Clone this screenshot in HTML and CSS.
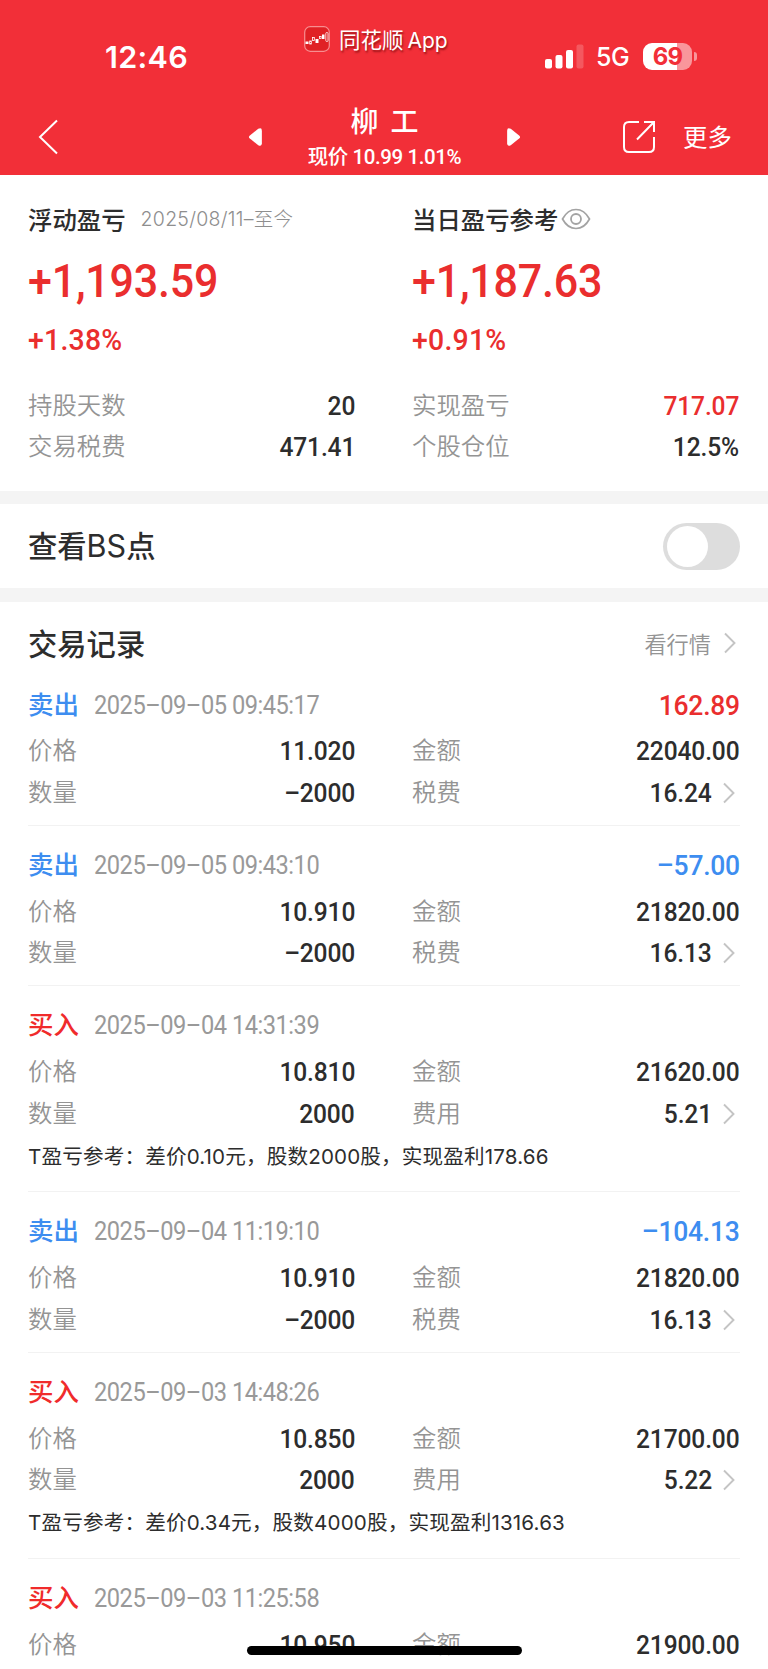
FILE: index.html
```html
<!DOCTYPE html>
<html lang="zh-CN">
<head>
<meta charset="utf-8">
<title>柳工</title>
<link rel="stylesheet" href="styles.css">
</head>
<body>
<svg width="0" height="0" class="defs"><symbol id="chev" viewBox="0 0 14 22"><path d="M2 1.5 11.5 11 2 20.5" fill="none" stroke="#c4c4c4" stroke-width="1.900"/></symbol></svg>
<div class="screen">
<header class="header">
  <div class="status">
    <span class="clock">12:46</span>
    <div class="app">
      <svg class="appicon" width="26" height="26" viewBox="0 0 26 26"><rect x=".7" y=".7" width="24.6" height="24.6" rx="5.5" fill="#e02125" stroke="#f78e90" stroke-width="1.2"/><g fill="#fff"><rect x="1.5" y="15.5" width="3" height="2.5"/><rect x="11.5" y="13" width="3" height="4"/><rect x="18" y="8.5" width="2.5" height="4.5"/></g><g fill="none" stroke="#fff" stroke-width=".8"><rect x="5.7" y="15" width="1.6" height="3"/><rect x="8.5" y="11.5" width="1.8" height="3"/><rect x="15.5" y="10.5" width="1.6" height="2"/><rect x="21.8" y="6.5" width="2.2" height="9" rx="1"/></g></svg>
      <span class="appname">同花顺<span class="latin">App</span></span>
    </div>
    <div class="signals">
      <svg width="39" height="25" viewBox="0 0 39 25"><g fill="#fff"><rect y="15" width="7" height="9.5" rx="2"/><rect x="10.5" y="11" width="7" height="13.5" rx="2"/><rect x="21" y="6" width="7" height="18.500" rx="2"/><rect x="31.500" y="0.500" width="7" height="24" rx="2" opacity=".2"/></g></svg>
      <span class="net">5G</span>
      <div class="battery"><span>69</span></div><i class="nub"></i>
    </div>
  </div>
  <nav class="nav">
    <svg class="back" width="22" height="36" viewBox="0 0 22 36"><path d="M19 1.500 2 18 19 34.500" fill="none" stroke="#fff" stroke-width="2"/></svg>
    <svg class="prev" width="15" height="20" viewBox="0 0 16 22"><path d="M1.500 9.500 11 2Q15 0 15 4V18Q15 22 11 20L1.500 12.500Q0 11 1.500 9.500Z" fill="#fff"/></svg>
    <div class="stock"><div class="name"><span>柳</span><span>工</span></div><div class="price">现价 10.99 1.01%</div></div>
    <svg class="next" width="15" height="20" viewBox="0 0 16 22"><path d="M14.500 9.500 5 2Q1 0 1 4V18Q1 22 5 20L14.500 12.500Q16 11 14.500 9.500Z" fill="#fff"/></svg>
    <svg class="share" width="34" height="34" viewBox="0 0 34 34"><path d="M17 2H7Q2 2 2 7V27Q2 32 7 32H27Q32 32 32 27V17M22 2H32V12M31.500 2.500 15 19.500" fill="none" stroke="#fff" stroke-width="2"/></svg>
    <span class="more">更多</span>
  </nav>
</header>

<section class="summary">
  <div>
    <div class="cap">浮动盈亏<span class="range">2025/08/11–至今</span></div>
    <div class="big">+1,193.59</div>
    <div class="pct">+1.38%</div>
    <div class="row"><span>持股天数</span><b>20</b></div>
    <div class="row"><span>交易税费</span><b>471.41</b></div>
  </div>
  <div>
    <div class="cap">当日盈亏参考<svg class="eye" width="30" height="22" viewBox="0 0 30 22"><path d="M1.500 11C5 4.500 9.500 1.500 15 1.500S25 4.500 28.500 11C25 17.500 20.500 20.500 15 20.500S5 17.500 1.500 11Z" fill="none" stroke="#a3a3a3" stroke-width="1.700"/><circle cx="15" cy="11" r="5" fill="none" stroke="#a3a3a3" stroke-width="1.800"/></svg></div>
    <div class="big">+1,187.63</div>
    <div class="pct">+0.91%</div>
    <div class="row"><span>实现盈亏</span><b class="red">717.07</b></div>
    <div class="row"><span>个股仓位</span><b>12.5%</b></div>
  </div>
</section>

<section class="bs"><h2>查看<span class="latin">BS</span>点</h2><div class="switch"><i></i></div></section>

<section class="records">
  <div class="rechead"><h2>交易记录</h2><span class="quote">看行情<svg class="chev"><use href="#chev"/></svg></span></div>

  <article>
    <div class="top"><strong class="sell">卖出</strong><time>2025–09–05 09:45:17</time><em class="red">162.89</em></div>
    <div class="cells"><div class="row"><span>价格</span><b>11.020</b></div><div class="row"><span>金额</span><b>22040.00</b></div><div class="row"><span>数量</span><b>–2000</b></div><div class="row"><span>税费</span><b>16.24</b><svg class="chev"><use href="#chev"/></svg></div></div>
  </article>
  <article>
    <div class="top"><strong class="sell">卖出</strong><time>2025–09–05 09:43:10</time><em class="blue">–57.00</em></div>
    <div class="cells"><div class="row"><span>价格</span><b>10.910</b></div><div class="row"><span>金额</span><b>21820.00</b></div><div class="row"><span>数量</span><b>–2000</b></div><div class="row"><span>税费</span><b>16.13</b><svg class="chev"><use href="#chev"/></svg></div></div>
  </article>
  <article>
    <div class="top"><strong class="buy">买入</strong><time>2025–09–04 14:31:39</time></div>
    <div class="cells"><div class="row"><span>价格</span><b>10.810</b></div><div class="row"><span>金额</span><b>21620.00</b></div><div class="row"><span>数量</span><b>2000</b></div><div class="row"><span>费用</span><b>5.21</b><svg class="chev"><use href="#chev"/></svg></div></div>
    <p class="note">T盈亏参考：差价0.10元，股数2000股，实现盈利178.66</p>
  </article>
  <article>
    <div class="top"><strong class="sell">卖出</strong><time>2025–09–04 11:19:10</time><em class="blue">–104.13</em></div>
    <div class="cells"><div class="row"><span>价格</span><b>10.910</b></div><div class="row"><span>金额</span><b>21820.00</b></div><div class="row"><span>数量</span><b>–2000</b></div><div class="row"><span>税费</span><b>16.13</b><svg class="chev"><use href="#chev"/></svg></div></div>
  </article>
  <article>
    <div class="top"><strong class="buy">买入</strong><time>2025–09–03 14:48:26</time></div>
    <div class="cells"><div class="row"><span>价格</span><b>10.850</b></div><div class="row"><span>金额</span><b>21700.00</b></div><div class="row"><span>数量</span><b>2000</b></div><div class="row"><span>费用</span><b>5.22</b><svg class="chev"><use href="#chev"/></svg></div></div>
    <p class="note">T盈亏参考：差价0.34元，股数4000股，实现盈利1316.63</p>
  </article>
  <article>
    <div class="top"><strong class="buy">买入</strong><time>2025–09–03 11:25:58</time></div>
    <div class="cells"><div class="row"><span>价格</span><b>10.950</b></div><div class="row"><span>金额</span><b>21900.00</b></div></div>
  </article>
</section>
<div class="home"></div>
</div>
</body>
</html>
```
FILE: styles.css
```css
* { box-sizing: border-box; margin: 0; padding: 0; }
body { background: #fff; color: #2d2d2d; font-family: Roboto, "Noto Sans CJK SC", sans-serif; }
.defs { position: absolute; }
.screen { position: relative; width: 768px; height: 1669px; overflow: hidden; }
svg { flex: none; display: block; }
.latin { font-family: Inter, sans-serif; }

.header { height: 175px; background: #f22f38; color: #fff; }
.status { height: 99px; display: flex; align-items: flex-start; }
.clock { width: 304px; padding: 37px 0 0 105px; font: 600 30.500px/40px Inter, sans-serif; letter-spacing: 0.300px; }
.app { width: 241px; display: flex; gap: 9px; padding-top: 26px; }
.appname { font-size: 21.500px; line-height: 28px; text-shadow: 1px 2px 2px rgba(90, 0, 0, .6); margin-top: 1px; }
.appname .latin { margin-left: 4px; font-size: 21px; }
.signals { display: flex; align-items: center; height: 28px; margin-top: 42px; }
.net { width: 36px; margin: 2px 0 0 12px; font: 500 25px/28px Inter, sans-serif; letter-spacing: -0.500px; }
.battery { width: 49px; height: 27px; margin-left: 11px; border-radius: 9px; background: linear-gradient(90deg, #fff 70%, #f9969b 70%); color: #f22f38; text-align: center; font: 700 24px/27px Inter, sans-serif; letter-spacing: -0.800px; }
.nub { width: 3px; height: 9px; margin-left: 2px; border-radius: 0 4px 4px 0; background: #f9969b; }
.nav { height: 76px; display: flex; align-items: center; padding-left: 38px; }
.prev { margin-left: 188px; }
.stock { width: 243px; text-align: center; }
.name { display: flex; justify-content: center; gap: 12px; font-size: 28px; font-weight: 500; line-height: 38px; margin-top: 1px; }
.price { font-size: 20.500px; font-weight: 500; line-height: 28px; margin-top: 1px; letter-spacing: -0.400px; white-space: nowrap; }
.share { margin-left: 101px; }
.more { margin: -3px 0 0 27px; font-size: 24.400px; }

.summary { display: grid; grid-template-columns: 327px 327px; column-gap: 57px; padding: 25px 28px 0; height: 316px; }
.cap { display: flex; align-items: center; height: 37px; font-size: 24.400px; font-weight: 500; }
.range { margin: 1px 0 0 15px; font: 300 19.500px/36px Inter, "Noto Sans CJK SC", sans-serif; letter-spacing: 0.270px; color: #8e8e8e; white-space: nowrap; }
.eye { margin-left: 3px; }
/* Roboto figures are narrowed to a DIN-like proportion */
.big, .pct, .row b, .top time, .top em { transform: scaleX(.945); transform-origin: 100% 50%; }
.big, .pct, .top time { transform-origin: 0 50%; }
.big { margin-top: 15px; height: 60px; line-height: 60px; font-size: 45.500px; font-weight: 500; color: #ea2e2e; letter-spacing: -0.200px; }
.pct { margin-top: 8px; height: 40px; line-height: 40px; font-size: 30px; font-weight: 500; color: #ea2e2e; letter-spacing: 0.300px; margin-bottom: 25px; }
.row { height: 41.500px; display: flex; align-items: center; font-size: 24.400px; line-height: 36px; color: #949494; font-weight: 350; }
.row b { margin-left: auto; font-size: 26px; font-weight: 500; letter-spacing: -0.150px; color: #2d2d2d; }
.row .chev { margin-left: 10px; }
.chev { width: 14px; height: 22px; margin-right: 3px; }
.red, .row b.red { color: #ea2e2e; }
.blue { color: #3d8df0; }

h2 { font-size: 29.300px; font-weight: 500; line-height: 40px; }
.bs { height: 111px; padding: 0 28px; border: solid #f4f4f4; border-width: 13px 0 14px; display: flex; align-items: center; justify-content: space-between; }
.bs h2 { margin-top: 1px; }
.bs .latin { font-weight: 400; font-size: 30.500px; }
.switch { width: 77px; height: 47px; border-radius: 24px; background: #ddd; padding: 3px 4px; }
.switch i { display: block; width: 41px; height: 41px; border-radius: 50%; background: #fff; }

.records { padding: 0 28px; }
.rechead { height: 63.500px; padding-top: 22px; display: flex; align-items: center; justify-content: space-between; }
.quote { display: flex; align-items: center; gap: 12px; font-size: 22.200px; font-weight: 350; color: #949494; margin-top: -3px; }
article { padding: 23px 0 11.300px; border-bottom: 1px solid #f2f2f2; }
.top { height: 33px; margin-bottom: 9.200px; display: flex; align-items: center; line-height: 33px; }
.top strong { font-size: 25.500px; font-weight: 500; }
.sell { color: #3d8df0; }
.buy { color: #f02b2b; }
.top time { margin-left: 15px; font-size: 25px; color: #999; letter-spacing: -0.500px; }
.top em { margin-left: auto; font-style: normal; font-size: 28px; font-weight: 500; letter-spacing: -0.250px; }
.cells { display: grid; grid-template-columns: 327px 327px; column-gap: 57px; }
.note { height: 45.500px; font: 400 20.600px/43.500px Inter, "Noto Sans CJK SC", sans-serif; letter-spacing: 0.150px; white-space: nowrap; }
.home { position: absolute; left: 247px; top: 1646px; width: 275px; height: 9px; border-radius: 5px; background: #000; }
```
